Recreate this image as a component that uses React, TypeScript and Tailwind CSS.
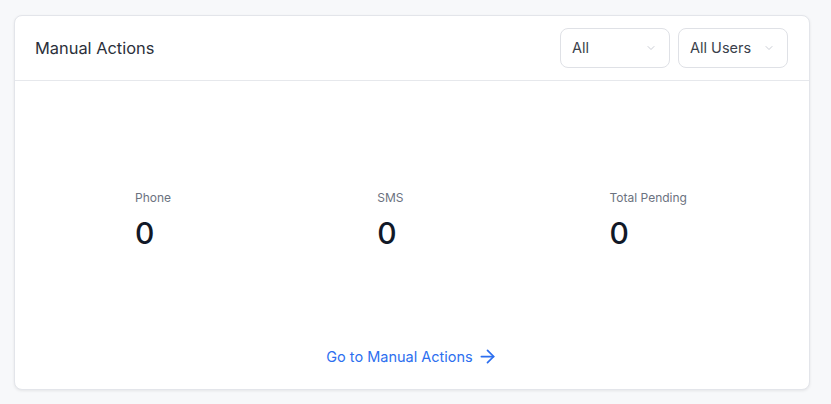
import { ArrowRight, ChevronDown } from 'lucide-react';

const stats = [
  { label: 'Phone', value: '0' },
  { label: 'SMS', value: '0' },
  { label: 'Total Pending', value: '0' },
];

const filters = ['All', 'All Users'];

function App() {
  return (
    <div className="min-h-screen bg-[#f7f8fa] pl-[14px] pt-[15px] font-['Inter',sans-serif]">
      <div className="w-[796px] h-[375px] rounded-[8px] border border-[#e3e5ea] bg-white shadow-[0_1px_3px_rgba(0,0,0,0.08)] flex flex-col">
        <div className="flex h-[65px] items-center justify-between border-b border-[#e6e8ec] pl-[20px] pr-[21px]">
          <h2 className="text-[16.4px] text-[#2b2f3a]">Manual Actions</h2>
          <div className="flex gap-[8px]">
            {filters.map((f) => (
              <button
                key={f}
                className="flex h-[40px] w-[110px] items-center justify-between rounded-[8px] border border-[#dfe1e6] bg-white pl-[11px] pr-[12px] text-[14.5px] text-[#3a3f4b]"
              >
                {f}
                <ChevronDown className="h-[12px] w-[12px] text-[#b8bcc6]" strokeWidth={1.5} />
              </button>
            ))}
          </div>
        </div>

        <div className="flex flex-1 flex-col pt-[109px]">
          <div className="flex justify-around pl-[17px] pr-[19px]">
            {stats.map((s) => (
              <div key={s.label}>
                <div className="text-[12px] leading-[16px] text-[#6b7280]">{s.label}</div>
                <div className="mt-[9px] text-[30px] leading-[36px] font-medium text-[#111827]">{s.value}</div>
              </div>
            ))}
          </div>
          <div className="mt-[95px] flex justify-center">
            <a className="flex items-center gap-[4px] text-[14.5px] leading-[20px] text-[#2d6fef]">
              Go to Manual Actions
              <ArrowRight className="h-[21px] w-[21px]" strokeWidth={2} />
            </a>
          </div>
        </div>
      </div>
    </div>
  );
}

export default App;
